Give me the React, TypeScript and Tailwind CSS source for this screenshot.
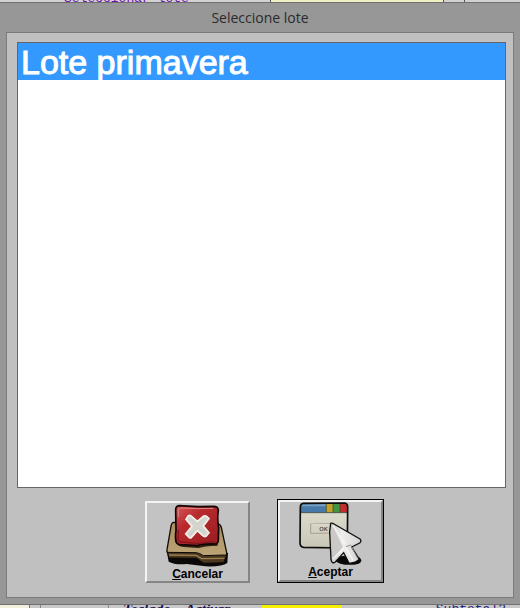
import { useState } from "react";

const lotes = ["Lote primavera"];

function CancelIcon() {
  return (
    <svg className="size-[63px]" viewBox="78 29 189 189" aria-hidden="true">
      <defs>
        <linearGradient id="red" x1="0" y1="0" x2="1" y2="1">
          <stop offset="0" stopColor="#d8595a" />
          <stop offset="0.35" stopColor="#b92a2e" />
          <stop offset="1" stopColor="#981c20" />
        </linearGradient>
        <linearGradient id="folder" x1="0" y1="0" x2="0" y2="1">
          <stop offset="0" stopColor="#a88f60" />
          <stop offset="1" stopColor="#bda577" />
        </linearGradient>
      </defs>
      <path d="M82 180 L86 202 Q104 212 140 209 L196 216 Q246 218 262 206 L264 176 Z" fill="#0b0908" />
      <path d="M101 84 Q95 84 93 96 L81 166 Q79 176 88 179 L166 181 Q176 181 182 188 L248 188 Q260 186 260 175 L244 99 Q242 90 232 88 Z" fill="url(#folder)" stroke="#120d08" strokeWidth="4" />
      <path d="M82 174 L87 191 L170 192 Q180 200 192 207 L251 205 L260 184 L252 182 L190 184 Q180 176 168 175 Z" fill="#4c3820" stroke="#0d0906" strokeWidth="3" />
      <path d="M87 182 L168 183 L185 193 L253 192" fill="none" stroke="#9c8153" strokeWidth="4" />
      <path d="M107 136 Q110 153 130 155 L176 158 Q190 152 233 151" fill="none" stroke="#2d2110" strokeWidth="6" />
      <path d="M117 34 Q107 35 107 48 L108 108 Q105 128 108 141 Q110 150 122 151 L172 154 Q188 148 223 149 Q234 149 235 138 L236 100 Q231 72 235 49 Q235 37 223 36 L174 37 Z" fill="url(#red)" stroke="#120506" strokeWidth="5" />
      <path d="M115 68 L115 47 Q116 41 123 41 L171 43 L220 42" fill="none" stroke="#df8580" strokeWidth="3" />
      <path d="M115 107 L114 136 Q116 143 126 143 L174 147 L222 142" fill="none" stroke="#80171b" strokeWidth="4" />
      <path d="M145 64 Q150 61 154 65 L172 81 L191 65 Q196 63 200 66 L207 73 L190 95 L207 115 L198 126 Q193 128 188 124 L172 109 L154 130 Q149 132 145 127 L137 119 L156 96 L138 75 Z" fill="#d6d6d0" stroke="#f4f0e8" strokeWidth="5" />
      <path d="M151 73 L171 91 L191 75 M151 121 L172 99 L194 117" fill="none" stroke="#cdd1cd" strokeWidth="4" />
    </svg>
  );
}

function AcceptIcon() {
  return (
    <svg className="size-[63px]" viewBox="85 22 189 189" aria-hidden="true">
      <defs>
        <linearGradient id="page" x1="0" y1="0" x2="0" y2="1">
          <stop offset="0" stopColor="#e2e0d2" />
          <stop offset="1" stopColor="#c8c6b6" />
        </linearGradient>
        <linearGradient id="arrow" x1="0" y1="0" x2="1" y2="0">
          <stop offset="0" stopColor="#c4c2c0" />
          <stop offset="0.4" stopColor="#eeeeec" />
          <stop offset="1" stopColor="#d4d2d2" />
        </linearGradient>
        <clipPath id="frame">
          <path d="M98 26 L222 25 Q231 26 231 37 L230 152 Q230 160 220 160 L99 158 Q89 157 88 146 L89 38 Q89 27 98 26 Z" />
        </clipPath>
      </defs>
      <g clipPath="url(#frame)">
        <path d="M86 22 H234 V164 H86 Z" fill="url(#page)" />
        <path d="M86 22 H168 V54 H86 Z" fill="#4779ab" />
        <path d="M86 29 H165 V35 H86 Z" fill="#78a0c3" />
        <path d="M166 22 H187 V54 H166 Z" fill="#c5a12c" />
        <path d="M187 22 H208 V54 H187 Z" fill="#3f9742" />
        <path d="M208 22 H234 V54 H208 Z" fill="#c52b2a" />
        <path d="M86 54 H234" stroke="#4f5952" strokeWidth="3" />
        <path d="M167 27 V54 M187 27 V54 M208 27 V54" stroke="#29442d" strokeWidth="2" />
      </g>
      <path d="M98 26 L222 25 Q231 26 231 37 L230 152 Q230 160 220 160 L99 158 Q89 157 88 146 L89 38 Q89 27 98 26 Z" fill="none" stroke="#0d0d0b" strokeWidth="5" />
      <path d="M120 88 L190 87 V115 L120 116 Z" fill="#d6d2c3" stroke="#88867a" strokeWidth="2" />
      <path d="M122 90 H187" stroke="#f2efe2" strokeWidth="2" />
      <text x="146" y="108" className="font-['Liberation_Sans',sans-serif] text-[17px]" fill="#555249">OK</text>
      <path d="M180 193 Q198 184 218 184 L266 188 Q279 199 264 207 Q238 214 209 207 Z" fill="#080808" />
      <path d="M180 86 Q185 84 190 88 L268 133 Q274 139 267 145 L243 157 L266 194 Q253 207 235 205 L219 174 L194 202 Q184 209 181 195 L177 111 Z" fill="url(#arrow)" stroke="#111" strokeWidth="4" />
      <path d="M185 95 L218 159 L186 195 L181 112 Z" fill="#cbc8c6" />
      <path d="M187 92 L223 149 M220 157 L186 194 M224 157 L248 198" fill="none" stroke="#f6f6f3" strokeWidth="4" />
      <path d="M226 156 L240 151 L260 190" fill="none" stroke="#918f8f" strokeWidth="3" />
    </svg>
  );
}

export default function App() {
  const [lote, setLote] = useState(lotes[0]);

  return (
    <main className="flex min-h-screen flex-col bg-[#c8c8c8] font-['Liberation_Sans',Arial,sans-serif]">
      <div className="flex h-0.5 items-end overflow-hidden bg-[#d2d2d2]">
        <div className="flex w-[52%] items-end pl-16">
          <span className="font-['Liberation_Mono',monospace] text-[13px] leading-[7px] text-purple-800">Seleccionar lote</span>
        </div>
        <div className="h-full w-1/3 border-x border-[#555] bg-[#eff0c4]" />
        <div className="ml-5 h-full flex-1 border-l border-[#555]" />
      </div>

      <section
        aria-labelledby="titulo"
        className="flex flex-1 flex-col border-y border-[#707070] bg-[#979797] px-1.5 pb-1.5"
      >
        <h1
          id="titulo"
          className="py-1 text-center font-['Open_Sans',sans-serif] text-[14px] leading-[21px] text-[#2b2b2b]"
        >
          Seleccione lote
        </h1>

        <form
          className="flex flex-1 flex-col border border-[#7b7b7b] bg-[#c0c0c0] pt-[9px] pr-[7px] pb-3.5 pl-2.5"
          onSubmit={(e) => e.preventDefault()}
        >
          <select
            size={2}
            aria-labelledby="titulo"
            value={lote}
            onChange={(e) => setLote(e.target.value)}
            className="w-full flex-1 appearance-none overflow-hidden border border-[#666] bg-white text-[34px] leading-[37px] outline-none"
          >
            {lotes.map((l) => (
              <option
                key={l}
                value={l}
                className="h-[37px] min-h-0 px-[3px] py-0 leading-[35px] checked:bg-linear-to-r checked:from-[#3399ff] checked:to-[#3399ff] checked:text-white checked:[-webkit-text-stroke:1px_white]"
              >
                {l}
              </option>
            ))}
          </select>

          <div className="flex items-end justify-center gap-[27px] pt-[11px] pl-1.5">
            <button
              type="button"
              className="flex w-[105px] flex-col items-center border-2 border-t-[#f4f4f4] border-r-[#858585] border-b-[#858585] border-l-[#f4f4f4] bg-[#c3c3c3] pt-px text-[12px] leading-[14px] font-bold text-black"
            >
              <CancelIcon />
              <span><u>C</u>ancelar</span>
            </button>
            <button
              type="submit"
              className="border border-black text-[12px] leading-[14px] font-bold text-black"
            >
              <span className="flex w-[105px] flex-col items-center border-2 border-t-[#f4f4f4] border-r-[#858585] border-b-[#858585] border-l-[#f4f4f4] bg-[#c3c3c3] pb-px">
                <AcceptIcon />
                <span><u>A</u>ceptar</span>
              </span>
            </button>
          </div>
        </form>
      </section>

      <div className="flex h-[3px] items-start overflow-hidden">
        <div className="h-full w-[30px] border-r border-[#777] bg-[#f0f0dc]" />
        <div className="ml-2.5 h-full w-[69px] border-x border-[#888]" />
        <div className="flex-1 pl-3.5 font-['Liberation_Serif',serif] text-[15px] leading-[9px] font-bold whitespace-pre text-[#151550] italic">Teclado    Activar</div>
        <div className="h-full w-20 bg-[#f6f000]" />
        <div className="w-[178px] pr-3.5 text-right font-['Liberation_Mono',monospace] text-[13px] leading-[9px] text-[#24247a]">Subtotal2</div>
      </div>
    </main>
  );
}
